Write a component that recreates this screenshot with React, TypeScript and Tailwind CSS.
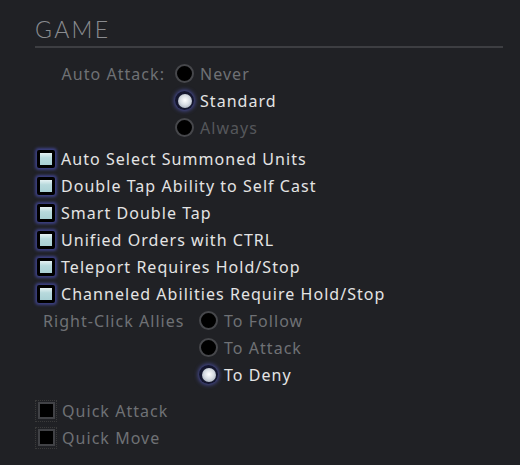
import React from 'react';

type RadioProps = { label: string; checked?: boolean; dim?: boolean };

function Radio({ label, checked, dim }: RadioProps) {
  return (
    <div className="flex h-[27px] items-center gap-[6px]">
      {checked ? (
        <span className="flex h-[19px] w-[19px] items-center justify-center rounded-full bg-[#14162e] shadow-[0_0_4px_1px_#4b4f9c]">
          <span className="h-[14px] w-[14px] rounded-full bg-[radial-gradient(circle_at_50%_45%,#ffffff_0%,#d8dde4_45%,#8f98a6_100%)]" />
        </span>
      ) : (
        <span className="h-[19px] w-[19px] rounded-full border-2 border-[#46474b] bg-black" />
      )}
      <span className={checked ? 'text-[#e4e4e4]' : dim ? 'text-[#55575b]' : 'text-[#6f7175]'}>
        {label}
      </span>
    </div>
  );
}

type CheckProps = { label: string; checked?: boolean };

function Check({ label, checked }: CheckProps) {
  return (
    <div className="flex h-[27px] items-center gap-[6px]">
      {checked ? (
        <span className="flex h-[18px] w-[18px] items-center justify-center rounded-[2px] bg-black shadow-[0_0_3px_2px_#3d4185]">
          <span className="h-[12px] w-[12px] bg-[linear-gradient(180deg,#e6f2f3_0%,#b7d9dc_40%,#a9d0d4_100%)]" />
        </span>
      ) : (
        <span className="flex h-[20px] w-[20px] items-center justify-center outline-1 outline-dotted outline-[#3a3a3a]">
          <span className="h-[17px] w-[17px] border-2 border-[#414246] bg-black" />
        </span>
      )}
      <span className={checked ? 'text-[#e4e4e4]' : 'text-[#6f7175]'}>{label}</span>
    </div>
  );
}

export default function App() {
  return (
    <div
      className="h-[465px] w-[520px] bg-[#202125] pl-[35px] pr-[17px] pt-[17px] text-[16px] tracking-[0.065em]"
      style={{ fontFamily: '"Noto Sans", "Open Sans", sans-serif' }}
    >
      <h2
        className="text-[23px] font-light uppercase leading-[24px] tracking-[0.1em] text-[#8a8c90]"
        style={{ fontFamily: 'Lato, "Noto Sans", sans-serif' }}
      >
        Game
      </h2>
      <div className="mt-[5px] h-[2px] bg-[#3d3e42]" />

      <div className="mt-[12px] flex">
        <div className="flex h-[27px] w-[140px] items-center justify-end pr-[10px] text-[#6f7175]">
          Auto Attack:
        </div>
        <div className="flex flex-col">
          <Radio label="Never" />
          <Radio label="Standard" checked />
          <Radio label="Always" dim />
        </div>
      </div>

      <div className="mt-[4px] flex flex-col pl-[2px]">
        <Check label="Auto Select Summoned Units" checked />
        <Check label="Double Tap Ability to Self Cast" checked />
        <Check label="Smart Double Tap" checked />
        <Check label="Unified Orders with CTRL" checked />
        <Check label="Teleport Requires Hold/Stop" checked />
        <Check label="Channeled Abilities Require Hold/Stop" checked />
      </div>

      <div className="flex">
        <div className="flex h-[27px] w-[164px] items-center pl-[8px] text-[#6f7175]">
          Right-Click Allies
        </div>
        <div className="flex flex-col">
          <Radio label="To Follow" />
          <Radio label="To Attack" />
          <Radio label="To Deny" checked />
        </div>
      </div>

      <div className="mt-[9px] flex flex-col pl-[1px]">
        <Check label="Quick Attack" />
        <Check label="Quick Move" />
      </div>
    </div>
  );
}
